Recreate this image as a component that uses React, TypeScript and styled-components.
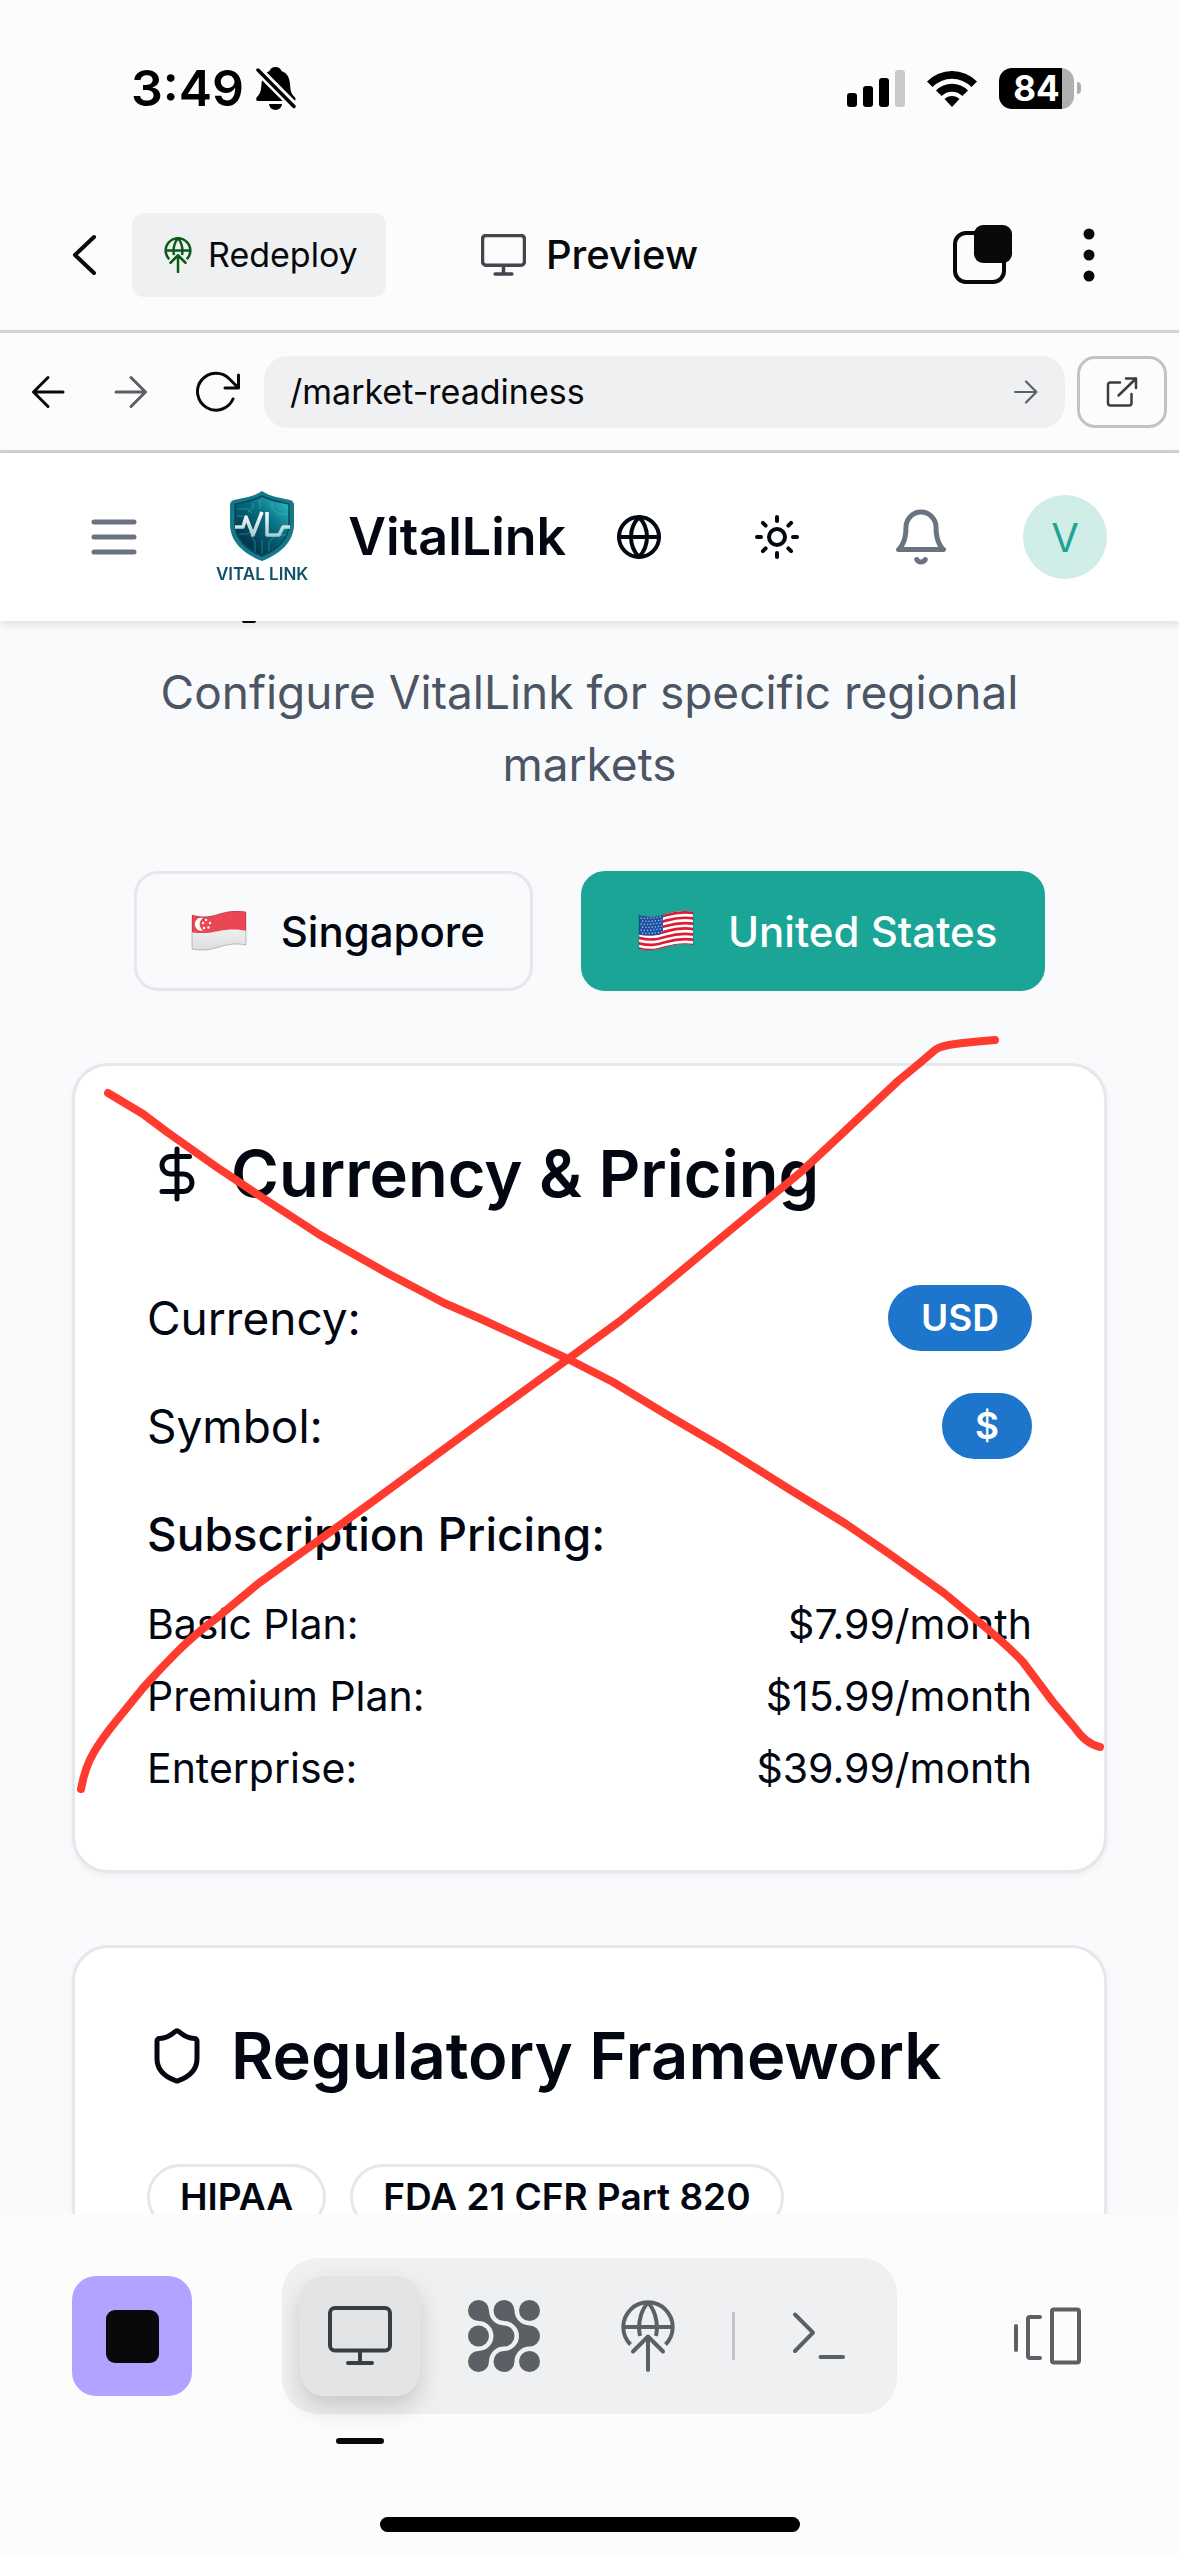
import React from "react";
import styled, { createGlobalStyle, css } from "styled-components";
import { Globe, Sun, DollarSign, Shield } from "lucide-react";

const Global = createGlobalStyle`
  *, *::before, *::after { box-sizing: border-box; }
  body { margin: 0; background: #fcfcfc; }
  h1, h2, h3, p, dl, dd { margin: 0; font-weight: inherit; font-size: inherit; }
  button, input { font: inherit; color: inherit; border: 0; padding: 0; background: none; }
  svg { display: block; flex: none; }
`;

const Shell = styled.div`
  display: flex;
  flex-direction: column;
  height: 100vh;
  background: #fcfcfc;
  color: #030712;
  font-family: Inter, "Liberation Sans", sans-serif;
`;

const StatusBar = styled.div`
  display: flex;
  align-items: center;
  justify-content: space-between;
  height: 176px;
  padding: 0 98px 0 131px;
  color: #000;
`;

const StatusGroup = styled.div<{ $gap: number }>`
  display: flex;
  align-items: center;
  gap: ${(p) => p.$gap}px;
`;

const Time = styled.span`
  font-size: 50px;
  font-weight: 600;
  line-height: 60px;
`;

const Battery = styled.span`
  display: flex;
  align-items: center;
  gap: 3px;
`;

const BatteryBody = styled.span`
  display: flex;
  align-items: center;
  justify-content: center;
  width: 75px;
  height: 41px;
  border-radius: 13px;
  background: linear-gradient(to right, #000 84%, #b0b0b0 84%);
  color: #fff;
  font-size: 35px;
  font-weight: 700;
`;

const BatteryTip = styled.span`
  width: 4px;
  height: 12px;
  border-radius: 0 6px 6px 0;
  background: #b0b0b0;
`;

const AppBar = styled.header`
  display: grid;
  grid-template-columns: 1fr auto 1fr;
  align-items: center;
  height: 157px;
  padding: 3px 72px 0;
  border-bottom: 3px solid #d2d3d5;
`;

const AppBarSide = styled.div<{ $end?: boolean }>`
  display: flex;
  align-items: center;
  gap: ${(p) => (p.$end ? 70 : 36)}px;
  justify-content: ${(p) => (p.$end ? "flex-end" : "flex-start")};
  padding-right: ${(p) => (p.$end ? 12 : 0)}px;
`;

const IconButton = styled.button<{ $color?: string }>`
  display: inline-flex;
  align-items: center;
  justify-content: center;
  color: ${(p) => p.$color || "#08090b"};
`;

const RedeployButton = styled.button`
  display: inline-flex;
  align-items: center;
  gap: 12px;
  height: 84px;
  padding: 0 28px;
  border-radius: 12px;
  background: #eff0f2;
  color: #08090b;
  font-size: 34px;
`;

const AppTitle = styled.h1`
  display: flex;
  align-items: center;
  gap: 20px;
  color: #08090b;
  font-size: 40px;
  font-weight: 500;
  line-height: 48px;

  svg {
    color: #44464e;
  }
`;

const AddressBar = styled.form`
  display: flex;
  align-items: center;
  height: 120px;
  padding: 0 12px 0 30px;
  border-bottom: 3px solid #d2d3d5;
`;

const NavButtons = styled.div`
  display: flex;
  align-items: center;
  gap: 47px;
  margin-right: 24px;
`;

const AddressField = styled.label`
  display: flex;
  flex: 1;
  align-items: center;
  min-width: 0;
  height: 72px;
  margin-right: 12px;
  padding: 0 26px;
  border-radius: 24px;
  background: #eff0f2;
`;

const AddressInput = styled.input`
  flex: 1;
  min-width: 0;
  color: #08090b;
  font-size: 34px;
  line-height: 48px;
  outline: none;
`;

const OpenLink = styled.a`
  display: flex;
  align-items: center;
  justify-content: center;
  width: 90px;
  height: 72px;
  border: 3px solid #c0c4c4;
  border-radius: 18px;
  color: #3b3d44;
`;

const SiteHeader = styled.header`
  position: relative;
  z-index: 1;
  display: flex;
  align-items: center;
  justify-content: space-between;
  height: 168px;
  padding: 0 72px 0 84px;
  background: #fff;
  box-shadow: 0 3px 9px rgba(0, 0, 0, 0.12);
`;

const Brand = styled.div`
  display: flex;
  align-items: center;
  gap: 40px;
  font-size: 52px;
  font-weight: 600;
  line-height: 72px;
`;

const BrandGroup = styled.div`
  display: flex;
  align-items: center;
  gap: 72px;
`;

const LogoMark = styled.div`
  display: flex;
  flex-direction: column;
  align-items: center;
  gap: 2px;
  color: #0f5068;
  font-size: 17px;
  font-weight: 600;
  line-height: 20px;
`;

const HeaderActions = styled.div`
  display: flex;
  align-items: center;
`;

const HeaderButton = styled(IconButton)<{ $width: number }>`
  width: ${(p) => p.$width}px;
`;

const Avatar = styled.button`
  width: 84px;
  height: 84px;
  margin-left: 30px;
  border-radius: 50%;
  background: #d1ede8;
  color: #1aa596;
  font-size: 40px;
`;

const Content = styled.main`
  position: relative;
  display: flex;
  flex: 1;
  flex-direction: column;
  min-height: 0;
  padding: 35px 72px 72px;
  overflow-y: auto;
  scrollbar-width: none;
  background: #f9fafc;
`;

/* Lower edge of the page title that has scrolled under the header */
const TitleEdge = styled.span`
  position: absolute;
  top: 0;
  left: 242px;
  width: 14px;
  height: 2px;
  border-radius: 0 0 7px 7px;
  background: #030712;
`;

const Lead = styled.p`
  color: #4b5563;
  font-size: 46px;
  line-height: 72px;
  text-align: center;
`;

const Markets = styled.div`
  display: flex;
  flex: none;
  justify-content: center;
  gap: 48px;
  margin: 71px 0 72px;
`;

const MarketButton = styled.button<{ $active?: boolean }>`
  display: flex;
  align-items: center;
  gap: 34px;
  height: 120px;
  padding: 0 45px 0 54px;
  border: 3px solid ${(p) => (p.$active ? "#1aa596" : "#e5e7eb")};
  border-radius: 24px;
  background: ${(p) => (p.$active ? "#1aa596" : "#f9fafc")};
  color: ${(p) => (p.$active ? "#fff" : "#030712")};
  font-size: 42px;
  font-weight: 500;
`;

const Cards = styled.div`
  display: flex;
  flex-direction: column;
  gap: 72px;
`;

const Card = styled.section`
  position: relative;
  display: flex;
  flex-direction: column;
  gap: 72px;
  padding: 72px;
  border: 3px solid #e5e7eb;
  border-radius: 36px;
  background: #fff;
  box-shadow: 0 3px 6px rgba(0, 0, 0, 0.05);
`;

const CardTitle = styled.h2`
  display: flex;
  align-items: center;
  gap: 24px;
  font-size: 65px;
  font-weight: 600;
  line-height: 72px;
`;

const CardBody = styled.div`
  display: flex;
  flex-direction: column;
  gap: 36px;
`;

const Field = styled.div`
  display: flex;
  align-items: center;
  justify-content: space-between;
  font-size: 46px;
  line-height: 72px;
`;

const Badge = styled.span<{ $outline?: boolean }>`
  height: 66px;
  padding: 6px 30px;
  border: 3px solid transparent;
  border-radius: 33px;
  font-size: 37px;
  font-weight: 600;
  line-height: 48px;
  white-space: nowrap;
  ${(p) =>
    p.$outline
      ? css`
          border-color: #e5e7eb;
        `
      : css`
          border-color: #1d76cc;
          background: #1d76cc;
          color: #fff;
        `}
`;

const Badges = styled.div`
  display: flex;
  flex-wrap: wrap;
  gap: 24px;
`;

const Plans = styled.div`
  display: flex;
  flex-direction: column;
  gap: 24px;
`;

const PlansTitle = styled.h3`
  font-size: 46px;
  font-weight: 500;
  line-height: 72px;
`;

const PlanList = styled.dl`
  display: flex;
  flex-direction: column;
  gap: 12px;
`;

const Plan = styled.div`
  display: flex;
  justify-content: space-between;
  font-size: 41px;
  line-height: 60px;
`;

const Markup = styled.svg`
  position: absolute;
  top: -3px;
  left: -3px;
  width: calc(100% + 6px);
  height: calc(100% + 6px);
  overflow: visible;
  pointer-events: none;
`;

const BottomBar = styled.footer`
  display: flex;
  flex: none;
  flex-direction: column;
  align-items: center;
  justify-content: space-between;
  height: 342px;
  padding: 44px 72px 24px;
  background: #fcfcfc;
`;

const Dock = styled.div`
  display: flex;
  align-items: center;
  justify-content: space-between;
  width: 100%;
`;

const DockGroup = styled.div`
  display: flex;
  align-items: center;
  gap: 24px;
  padding: 18px;
  border-radius: 36px;
  background: #eff0f2;
`;

const DockButton = styled.button<{ $tone?: "stop" | "active" }>`
  position: relative;
  display: flex;
  align-items: center;
  justify-content: center;
  width: 120px;
  height: 120px;
  border-radius: 24px;
  color: #5c5f66;
  ${(p) =>
    p.$tone === "stop" &&
    css`
      background: #b1a3ff;
    `}
  ${(p) =>
    p.$tone === "active" &&
    css`
      background: #e3e4e6;
      color: #3b3d44;
      box-shadow: 0 12px 24px rgba(0, 0, 0, 0.16);
      &::after {
        content: "";
        position: absolute;
        top: 162px;
        left: 36px;
        width: 48px;
        height: 6px;
        border-radius: 3px;
        background: #08090b;
      }
    `}
`;

const StopGlyph = styled.span`
  width: 53px;
  height: 53px;
  border-radius: 9px;
  background: #08090b;
`;

const DockDivider = styled.span`
  width: 3px;
  height: 48px;
  background: #c3c5c9;
`;

const HomeIndicator = styled.div`
  width: 420px;
  height: 15px;
  border-radius: 8px;
  background: #000;
`;

const line = {
  fill: "none",
  stroke: "currentColor",
  strokeLinecap: "round" as const,
  strokeLinejoin: "round" as const,
};

const BellOff = () => (
  <svg width="40" height="43" viewBox="0 0 40 43" aria-label="Silent">
    <path d="M19.500 0c3 0 5 1.500 6 4 6 2 8 7 8.500 13 .5 7 1 9.500 5 13.500 1 1 .5 3.500-1 3.500H2c-2 0-2.500-2.500-1-4 4-4 4-8 4.500-13C6 11 8 6 13.500 4c1-2.500 3-4 6-4ZM13 37h13a6.500 6 0 0 1-13 0Z" />
    <path d="M-1 0 42 43" stroke="#fcfcfc" strokeWidth="9" />
    <path d="M2 3 38 39.500" stroke="#000" strokeWidth="3.500" strokeLinecap="round" />
  </svg>
);

const Signal = () => (
  <svg width="58" height="37" viewBox="0 0 58 37" aria-label="Signal">
    <rect y="23" width="10" height="14" rx="3" />
    <rect x="16" y="16" width="10" height="21" rx="3" />
    <rect x="32" y="8" width="10" height="29" rx="3" />
    <rect x="48" width="10" height="37" rx="3" fill="#c9c9c9" />
  </svg>
);

const Wifi = () => (
  <svg width="50" height="37" viewBox="0 0 50 37" aria-label="Wi-Fi">
    <path d="M0 11.500A35 35 0 0 1 50 11.500L44.500 17A27.200 27.200 0 0 0 5.500 17ZM9 20.500A22.400 22.400 0 0 1 41 20.500L35.300 26A14.500 14.500 0 0 0 14.700 26ZM17.500 29A10.600 10.600 0 0 1 32.500 29L25 37Z" />
  </svg>
);

const Deploy = ({ size, color, weight = 4 }: { size: number; color?: string; weight?: number }) => (
  <svg width={size} height={size} viewBox="0 0 72 72" color={color} strokeWidth={weight} {...line}>
    <path strokeLinecap="butt" d="M18.500 44.500a24.700 24.700 0 1 1 35 0M11.500 27h49M36 2.500C30 9 25 22 28 36M36 2.500C42 9 47 22 44 36" />
    <path d="M36 70V36.500M21 51.500l15-15 15 15" />
  </svg>
);

const Monitor = ({ w, weight = 4 }: { w: number; weight?: number }) => (
  <svg width={w} height={Math.round((w * 60) / 64)} viewBox="0 0 64 60" strokeWidth={weight} {...line}>
    <rect x="2" y="2" width="60" height="42.500" rx="5" />
    <path d="M32 45v11M20 57h24" />
  </svg>
);

const Nodes = () => (
  <svg width="72" height="72" viewBox="0 0 72 72" fill="currentColor">
    <circle cx="10.500" cy="36" r="10.500" />
    <circle cx="61.500" cy="10.500" r="10.500" />
    <circle cx="61.500" cy="61.500" r="10.500" />
    <path d="M21 10.500A15 15 0 0 0 36 25.500A10.500 10.500 0 0 1 36 46.500A15 15 0 0 0 21 61.500A10.500 10.500 0 1 1 10.500 51A15 15 0 0 0 10.500 21A10.500 10.500 0 1 1 21 10.500Z" />
    <path d="M46.500 10.500A15 15 0 0 0 61.500 25.500A10.500 10.500 0 0 1 61.500 46.500A15 15 0 0 0 46.500 61.500A10.500 10.500 0 1 1 36 51A15 15 0 0 0 36 21A10.500 10.500 0 1 1 46.500 10.500Z" />
  </svg>
);

const Arrow = ({ size, back }: { size: number; back?: boolean }) => (
  <svg width={size} height={size} viewBox="0 0 36 36" strokeWidth="3" {...line}>
    <path d={back ? "M33 18H3.500M18 3.500 3.500 18 18 32.500" : "M3 18h29.500M18 3.500 32.500 18 18 32.500"} />
  </svg>
);

const FLAG = "M1 4C12 7 18 6 28 3S46-1 55 1V34C46 32 38 33 28 36S12 40 1 38Z";

const FlagSG = () => (
  <svg width="56" height="40" viewBox="0 0 56 40">
    <defs>
      <clipPath id="sg"><path d={FLAG} /></clipPath>
      <linearGradient id="sgw" x2="0" y2="1"><stop stopColor="#fff" /><stop offset="1" stopColor="#dcdcdc" /></linearGradient>
    </defs>
    <g clipPath="url(#sg)">
      <rect width="56" height="40" fill="url(#sgw)" />
      <path d="M0-2H56V20C46 18 38 18 28 20S12 23 0 21Z" fill="#ea4653" />
      <path d="M12 7a6.500 6.500 0 1 0 0 12.500A7.500 7.500 0 0 1 12 7Z" fill="#fff" />
      {[[15, 9], [19, 12], [17.5, 16.500], [13, 17], [12, 12]].map(([x, y]) => (
        <circle key={`${x}-${y}`} cx={x} cy={y} r="1.200" fill="#fff" />
      ))}
    </g>
    <path d={FLAG} fill="none" stroke="#00000038" strokeWidth="1" />
  </svg>
);

const FlagUS = () => (
  <svg width="56" height="40" viewBox="0 0 56 40">
    <defs>
      <clipPath id="us"><path d={FLAG} /></clipPath>
    </defs>
    <g clipPath="url(#us)">
      <rect width="56" height="40" fill="#fff" />
      {[0, 1, 2, 3, 4, 5, 6].map((i) => (
        <path
          key={i}
          transform={`translate(0 ${i * 5.35})`}
          d="M0 5.300C12 8.300 18 7.300 28 4.300S46 .3 57 2.300"
          stroke="#dd1c33"
          strokeWidth="2.700"
          fill="none"
        />
      ))}
      <path d="M0 0H25V22.500C16 25 9 25 0 23.500Z" fill="#1e52a4" />
      {[0, 1, 2, 3, 4, 5].map((r) => (
        <path key={r} d={`M${r % 2 ? 4 : 2.5} ${7 + r * 3}q11 1 21-1.500`} stroke="#c9d8f0" strokeWidth="1.100" strokeDasharray="1.200 2" fill="none" />
      ))}
    </g>
    <path d={FLAG} fill="none" stroke="#00000030" strokeWidth="1" />
  </svg>
);

const LogoShield = () => (
  <svg width="66" height="72" viewBox="0 0 66 72">
    <defs>
      <linearGradient id="lg" x1="1" y1="0" x2=".3" y2=".8">
        <stop stopColor="#35c8cf" />
        <stop offset=".5" stopColor="#087183" />
        <stop offset="1" stopColor="#013a50" />
      </linearGradient>
      <linearGradient id="lv" x2="0" y2="1"><stop stopColor="#fff" /><stop offset="1" stopColor="#a9cdd5" /></linearGradient>
    </defs>
    <path d="M33 1C42 7 52 8 61 10q4 1 4 5V34C65 52 51 64 33 71 15 64 1 52 1 34V15q0-4 4-5C14 8 24 7 33 1Z" fill="#15798a" />
    <path d="M33 6C42 11 51 12 60 14V34C60 49 48 60 33 66 18 60 6 49 6 34V14C15 12 24 11 33 6Z" fill="url(#lg)" stroke="#04495c" strokeWidth="1.500" />
    <path d="M8 19h11l4 4M8 26h7M10 44h9l5-5M26 62V51l-5-6M33 64V50M40 61V52l7-7M57 45h-7M43 12v7l7 5h8M31 10v9M24 13v5l-5 4" fill="none" stroke="#4fc3cc" strokeWidth="1" opacity=".45" />
    <path d="M6 37h8l3-10 7 18 9-23M38 22v23h12l4-8h7" fill="none" stroke="url(#lv)" strokeWidth="3.500" strokeLinejoin="round" />
  </svg>
);

const plans = [
  ["Basic Plan:", "$7.99/month"],
  ["Premium Plan:", "$15.99/month"],
  ["Enterprise:", "$39.99/month"],
];

export default function App() {
  return (
    <Shell>
      <Global />
      <StatusBar>
        <StatusGroup $gap={12}>
          <Time>3:49</Time>
          <BellOff />
        </StatusGroup>
        <StatusGroup $gap={22}>
          <Signal />
          <Wifi />
          <Battery>
            <BatteryBody>84</BatteryBody>
            <BatteryTip />
          </Battery>
        </StatusGroup>
      </StatusBar>

      <AppBar>
        <AppBarSide>
          <IconButton aria-label="Back">
            <svg width="24" height="42" viewBox="0 0 24 42" strokeWidth="4" {...line}>
              <path d="M22 3 3 21l19 18" />
            </svg>
          </IconButton>
          <RedeployButton>
            <Deploy size={36} color="#0a5a18" weight={5} />
            Redeploy
          </RedeployButton>
        </AppBarSide>
        <AppTitle>
          <Monitor w={45} weight={5} />
          Preview
        </AppTitle>
        <AppBarSide $end>
          <IconButton aria-label="Windows">
            <svg width="60" height="60" viewBox="0 0 60 60">
              <rect x="2" y="8" width="49" height="49" rx="11" fill="none" stroke="currentColor" strokeWidth="4" />
              <rect x="21" y="0" width="38" height="38" rx="9" fill="currentColor" />
            </svg>
          </IconButton>
          <IconButton aria-label="More">
            <svg width="12" height="54" viewBox="0 0 12 54" fill="currentColor">
              <circle cx="6" cy="6" r="5.500" />
              <circle cx="6" cy="27" r="5.500" />
              <circle cx="6" cy="48" r="5.500" />
            </svg>
          </IconButton>
        </AppBarSide>
      </AppBar>

      <AddressBar onSubmit={(e) => e.preventDefault()}>
        <NavButtons>
          <IconButton type="button" aria-label="Previous page"><Arrow size={36} back /></IconButton>
          <IconButton type="button" aria-label="Next page" $color="#5c5f66"><Arrow size={36} /></IconButton>
          <IconButton type="button" aria-label="Reload">
            <svg width="44" height="42" viewBox="0 0 44 42" strokeWidth="3" {...line}>
              <path d="M37 28A18.500 18.500 0 1 1 33.500 8L42 16.500M42.500 4V17H29" />
            </svg>
          </IconButton>
        </NavButtons>
        <AddressField>
          <AddressInput aria-label="Address" defaultValue="/market-readiness" />
          <IconButton aria-label="Go" $color="#5c5f66"><Arrow size={26} /></IconButton>
        </AddressField>
        <OpenLink href="#" aria-label="Open in new tab">
          <svg width="32" height="32" viewBox="0 0 32 32" strokeWidth="2.500" {...line}>
            <path d="M14 6.500H4.500a2.500 2.500 0 0 0-2.500 2.500V27a2.500 2.500 0 0 0 2.500 2.500H23a2.500 2.500 0 0 0 2.500-2.500V18M20 2.500h10V12M30 2.500 12.500 19.500" />
          </svg>
        </OpenLink>
      </AddressBar>

      <SiteHeader>
        <BrandGroup>
          <IconButton aria-label="Menu" $color="#6b7280">
            <svg width="60" height="60" viewBox="0 0 24 24" strokeWidth="2" {...line}>
              <path d="M4 6h16M4 12h16M4 18h16" />
            </svg>
          </IconButton>
          <Brand>
            <LogoMark>
              <LogoShield />
              VITAL LINK
            </LogoMark>
            VitalLink
          </Brand>
        </BrandGroup>
        <HeaderActions>
          <HeaderButton $width={132} aria-label="Language" $color="#030712"><Globe size={48} /></HeaderButton>
          <HeaderButton $width={144} aria-label="Theme" $color="#030712"><Sun size={48} /></HeaderButton>
          <HeaderButton $width={144} aria-label="Notifications" $color="#6b7280">
            <svg width="60" height="60" viewBox="0 0 24 24" strokeWidth="2" {...line}>
              <path d="M6 8a6 6 0 0 1 12 0c0 7 3 9 3 9H3s3-2 3-9M10.300 21a1.940 1.940 0 0 0 3.400 0" />
            </svg>
          </HeaderButton>
          <Avatar aria-label="Account">V</Avatar>
        </HeaderActions>
      </SiteHeader>

      <Content>
        <TitleEdge />
        <Lead>Configure VitalLink for specific regional markets</Lead>
        <Markets>
          <MarketButton><FlagSG />Singapore</MarketButton>
          <MarketButton $active><FlagUS />United States</MarketButton>
        </Markets>
        <Cards>
          <Card>
            <CardTitle><DollarSign size={60} />Currency &amp; Pricing</CardTitle>
            <CardBody>
              <Field><span>Currency:</span><Badge>USD</Badge></Field>
              <Field><span>Symbol:</span><Badge>$</Badge></Field>
              <Plans>
                <PlansTitle>Subscription Pricing:</PlansTitle>
                <PlanList>
                  {plans.map(([name, price]) => (
                    <Plan key={name}><dt>{name}</dt><dd>{price}</dd></Plan>
                  ))}
                </PlanList>
              </Plans>
            </CardBody>
            <Markup viewBox="72 1063 1035 810" fill="none" stroke="#ff3b30" strokeWidth="8" strokeLinecap="round" strokeLinejoin="round">
              <path d="M108 1093 143 1114 167 1132 218 1168 263 1198 320 1235 387 1273 444 1303 481 1319 568 1359 613 1382 669 1416 722 1447 789 1489 846 1524 891 1555 944 1593 985 1627Q1010 1648 1023 1662L1053 1702 1075 1728Q1086 1744 1100 1747" />
              <path d="M995 1040Q970 1042 955 1044T935 1050L921 1062 898 1081 846 1130 801 1172 722 1237 662 1287 620 1321 568 1359 481 1422 372 1502 308 1548 259 1583 218 1617Q195 1634 177 1652T143 1688L117 1720Q103 1737 94 1752T81 1789" />
            </Markup>
          </Card>
          <Card>
            <CardTitle><Shield size={60} />Regulatory Framework</CardTitle>
            <Badges>
              <Badge $outline>HIPAA</Badge>
              <Badge $outline>FDA 21 CFR Part 820</Badge>
            </Badges>
          </Card>
        </Cards>
      </Content>

      <BottomBar>
        <Dock>
          <DockButton $tone="stop" aria-label="Stop"><StopGlyph /></DockButton>
          <DockGroup>
            <DockButton $tone="active" aria-label="Preview"><Monitor w={64} /></DockButton>
            <DockButton aria-label="Agent"><Nodes /></DockButton>
            <DockButton aria-label="Deployments"><Deploy size={72} /></DockButton>
            <DockDivider />
            <DockButton aria-label="Shell">
              <svg width="72" height="72" viewBox="0 0 72 72" strokeWidth="4" {...line}>
                <path d="M12 14.500 30 32.700 12 51M37.500 57H60" />
              </svg>
            </DockButton>
          </DockGroup>
          <DockButton aria-label="Tabs">
            <svg width="72" height="72" viewBox="0 0 72 72" strokeWidth="4" {...line}>
              <path d="M5 26v24M29 17H19a2 2 0 0 0-2 2v37a2 2 0 0 0 2 2h10" />
              <rect x="41" y="9.500" width="27" height="53" rx="2" />
            </svg>
          </DockButton>
        </Dock>
        <HomeIndicator />
      </BottomBar>
    </Shell>
  );
}
